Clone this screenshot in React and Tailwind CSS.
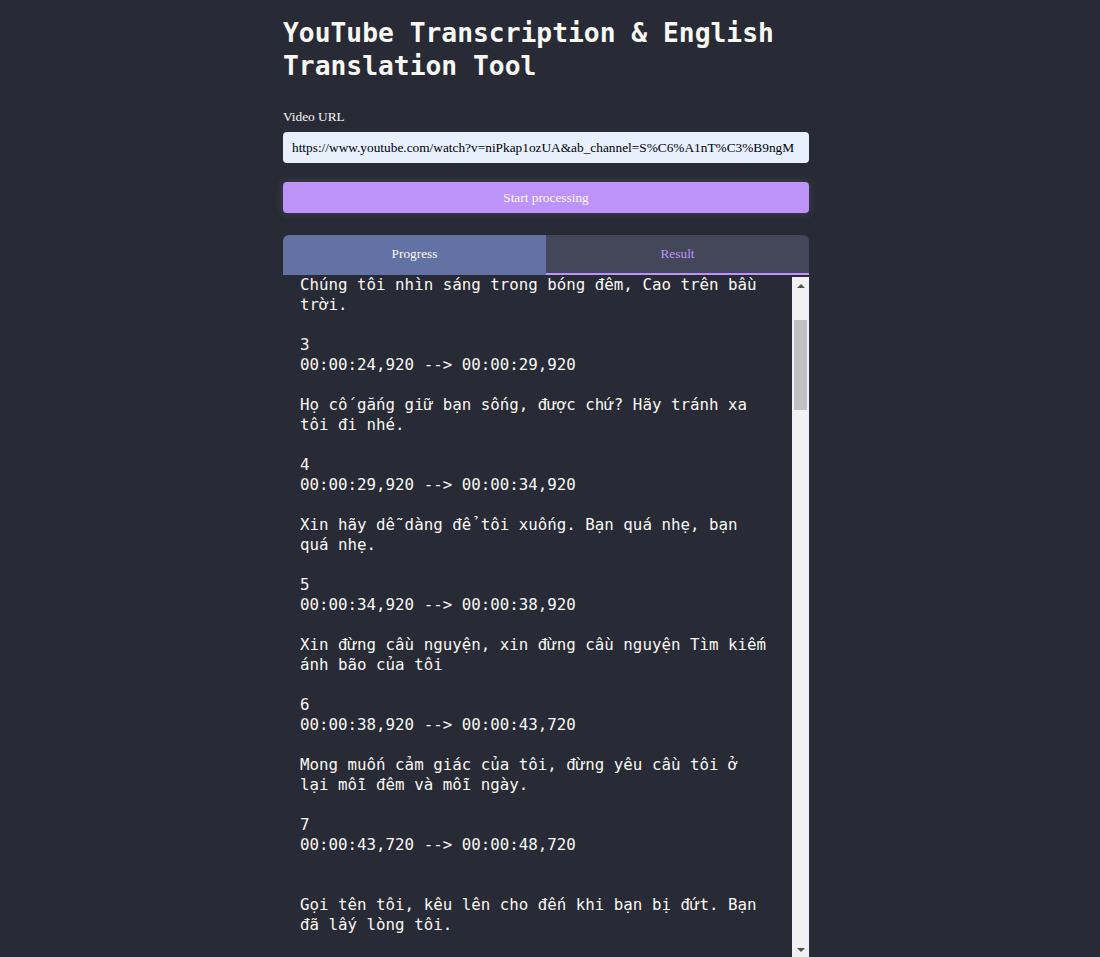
import { useState } from 'react';

// Visible part of the translated subtitle output
const resultLines = [
  'Chúng tôi nhìn sáng trong bóng đêm, Cao trên bầu',
  'trời.',
  '',
  '3',
  '00:00:24,920 --> 00:00:29,920',
  '',
  'Họ cố gắng giữ bạn sống, được chứ? Hãy tránh xa',
  'tôi đi nhé.',
  '',
  '4',
  '00:00:29,920 --> 00:00:34,920',
  '',
  'Xin hãy dễ dàng để tôi xuống. Bạn quá nhẹ, bạn',
  'quá nhẹ.',
  '',
  '5',
  '00:00:34,920 --> 00:00:38,920',
  '',
  'Xin đừng cầu nguyện, xin đừng cầu nguyện Tìm kiếm',
  'ánh bão của tôi',
  '',
  '6',
  '00:00:38,920 --> 00:00:43,720',
  '',
  'Mong muốn cảm giác của tôi, đừng yêu cầu tôi ở',
  'lại mỗi đêm và mỗi ngày.',
  '',
  '7',
  '00:00:43,720 --> 00:00:48,720',
  '',
  '',
  'Gọi tên tôi, kêu lên cho đến khi bạn bị đứt. Bạn',
  'đã lấy lòng tôi.',
  '',
  '',
  '',
].map((line) => line.normalize('NFC'));

const Scrollbar = () => (
  <div className="mt-[2px] h-[681px] w-[17px] shrink-0 bg-[#f1f1f1] flex flex-col items-center">
    <div className="h-[17px] w-full flex items-center justify-center">
      <div className="w-0 h-0 border-l-[4px] border-r-[4px] border-b-[4px] border-l-transparent border-r-transparent border-b-[#505050]" />
    </div>
    <div className="h-[26px]" />
    <div className="w-[13px] h-[90px] bg-[#c1c1c1]" />
    <div className="flex-1" />
    <div className="h-[17px] w-full flex items-center justify-center">
      <div className="w-0 h-0 border-l-[4px] border-r-[4px] border-t-[4px] border-l-transparent border-r-transparent border-t-[#505050]" />
    </div>
  </div>
);

export default function App() {
  const [tab, setTab] = useState('result');
  const [url, setUrl] = useState(
    'https://www.youtube.com/watch?v=niPkap1ozUA&ab_channel=S%C6%A1nT%C3%B9ngM'
  );

  return (
    <div className="min-h-screen bg-[#282a36] overflow-hidden">
      <div className="pr-2">
        <div className="mx-auto w-[526px] pt-[17px]">
          {/* Title */}
          <h1 className="font-['DejaVu_Sans_Mono',monospace] font-bold text-[26.3px] leading-[33px] text-[#f8f8f2]">
            YouTube Transcription &amp; English Translation Tool
          </h1>

          {/* URL form */}
          <label className="block mt-[25px] font-['Liberation_Serif',serif] text-[13.33px] leading-[18px] text-[#f8f8f2]">
            Video URL
          </label>
          <input
            value={url}
            onChange={(e) => setUrl(e.target.value)}
            className="mt-[6px] w-full h-[31px] rounded bg-[#e8f0fe] px-[9px] font-['Liberation_Serif',serif] text-[13.33px] text-black outline-none"
          />
          <button
            type="button"
            className="mt-[19px] w-full h-[31px] rounded bg-[#bd93f9] font-['Liberation_Serif',serif] text-[13.33px] text-[#f8f8f2] shadow-[0_0_8px_rgba(90,90,110,0.55)]"
          >
            Start processing
          </button>

          {/* Tabs */}
          <div className="mt-[22px] flex rounded-t-md overflow-hidden font-['Liberation_Serif',serif] text-[13.33px]">
            <button
              type="button"
              onClick={() => setTab('progress')}
              className={`flex-1 h-[40px] bg-[#6272a4] border-b-2 border-[#6272a4] ${tab === 'progress' ? 'text-[#bd93f9]' : 'text-[#f8f8f2]'}`}
            >
              Progress
            </button>
            <button
              type="button"
              onClick={() => setTab('result')}
              className="flex-1 h-[40px] bg-[#44475a] text-[#bd93f9] border-b-2 border-[#bd93f9]"
            >
              Result
            </button>
          </div>

          {/* Result output */}
          <div className="flex items-start">
            <div className="flex-1 h-[683px] overflow-hidden pl-[17px] font-['DejaVu_Sans_Mono','Liberation_Mono',monospace] text-[15.8px] leading-[20px] text-[#f8f8f2] whitespace-pre">
              {resultLines.map((line, i) => (
                <div key={i} className="h-[20px]">{line}</div>
              ))}
            </div>
            <Scrollbar />
          </div>
        </div>
      </div>
    </div>
  );
}
